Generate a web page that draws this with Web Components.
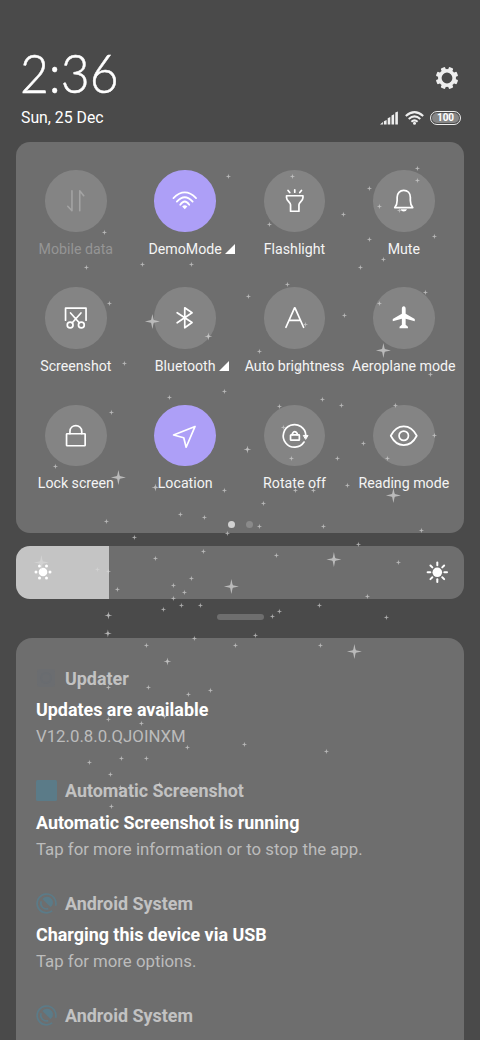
<!DOCTYPE html>
<html lang="en">
<head>
<meta charset="utf-8">
<title>Control centre</title>
<style>
html,body{margin:0;height:100%;overflow:hidden;background:#4a4a4a}
body{font-family:Roboto,"Liberation Sans",sans-serif;color:#fff}
</style>
</head>
<body>
<control-centre></control-centre>
<script>
const ICONS = {
  data:'<g stroke="#a3a3a3" stroke-width="1.6"><path d="M-3.8-10V10L-8 5.5"/><path d="M4 10V-10L8-5"/></g>',
  wifi:'<g stroke-width="1.8"><path d="M-11.3-2.6Q0-14 11.3-2.6M-7.9.9Q0-7.9 7.9.9M-4.5 4.1Q0-2.6 4.5 4.1"/></g><path d="M-2.6 5.8Q0 3 2.6 5.8L0 8.6Z" fill="#fff" stroke="none"/>',
  flash:'<path d="M-8.2-5H8.2V-3C8.2 0 4.2 1.5 4.2 4V10.5H-4.2V4C-4.2 1.5-8.2 0-8.2-3ZM0-8.5V-11M-5-8.2L-6.7-10.3M5-8.2L6.7-10.3"/>',
  bell:'<path d="M-9 6.8H9C7.2 4.8 6.6 3 6.6-.3V-3.5C6.6-7.5 4-10.4 0-10.4S-6.6-7.5-6.6-3.5V-.3C-6.6 3-7.2 4.8-9 6.8Z"/><path d="M-3.3 8.5H3.3Q2.5 10.8 0 10.8T-3.3 8.5Z" fill="#fff" stroke="none"/>',
  shot:'<path d="M-10.2 2.4V-9.6H10.3V2.4M-5.2-4.8L3.5 5M5.2-4.8L-3.5 5"/><circle cx="-5.6" cy="7.3" r="2.9"/><circle cx="5.6" cy="7.3" r="2.9"/>',
  bt:'<path d="M-7.6-5L7.3 4.8L0 10V-10L7.3-5L-7.6 5"/>',
  auto:'<path d="M-8.8 9.5L-.2-9.8H.2L8.8 9.5M-5.4 2.7H5.4"/>',
  plane:'<path d="M0-11.6C-1.2-11.6-1.9-10.5-1.9-9V-4L-11 1.3V3.5L-1.9 1V7L-4.2 9V10.6H4.2V9L1.9 7V1L11 3.5V1.3L1.9-4V-9C1.9-10.5 1.2-11.6 0-11.6Z" fill="#fff" stroke="none"/>',
  lock:'<rect x="-9.2" y="-2" width="18.6" height="12" rx=".6"/><path d="M-5.8-2.2V-4.3C-5.8-12 6-12 6-4.3V-2.2"/>',
  loc:'<path d="M10.3-9.3L-11.2-.7L-1 2L1.4 11.5Z"/>',
  rotate:'<path d="M9.3 6.3A11.3 11.3 0 1 1 11.1-.2"/><path d="M8.9-.3H13.3L11.1 3.3Z" fill="#fff" stroke-width="1"/><rect x="-4.2" y="-.8" width="8.8" height="5.2" rx=".5"/><path d="M-2.3-1V-2.2Q0-6 2.5-2.2V-1"/>',
  eye:'<path d="M-13 0C-6.6-12.5 6.6-12.5 13 0C6.6 12.5-6.6 12.5-13 0Z"/><circle r="4.7"/>'
};

function define(name, css, html){
  customElements.define(name, class extends HTMLElement{
    constructor(){
      super();
      const t=document.createElement('template');
      t.innerHTML=`<style>*{box-sizing:border-box}${css}</style>${typeof html==='function'?html(this):html}`;
      this.attachShadow({mode:'open'}).append(t.content.cloneNode(true));
    }
  });
}

define('status-header',`
:host{display:flex;justify-content:space-between;height:142px;padding:46px 19px 0 21px}
.time{font:300 53.5px/58px Lato,sans-serif;height:60px;width:110px;margin:-3px 0 5px -1px;transform:scaleX(.93);transform-origin:left;-webkit-text-stroke:.5px #fff}
.date{font-size:15.8px;line-height:20px;white-space:nowrap}
.right{display:flex;flex-direction:column;align-items:flex-end;padding-top:20px}
.gear{margin-right:2.5px}
.sys{display:flex;align-items:center;gap:6.5px;height:16px;margin-top:20px}
.battery{width:31px;height:14px;border:1.5px solid #eee;border-radius:7px;padding:1px;display:flex}
.battery span{flex:1;background:#858585;border-radius:5px;font-size:10px;font-weight:700;line-height:10px;text-align:center}
svg{display:block}`,
()=>{
  let teeth='';
  for(let i=0;i<8;i++) teeth+=`<rect x="-2.3" y="-11.2" width="4.6" height="5" rx="1" transform="rotate(${i*45+22.5})"/>`;
  return `<div><div class="time">2:36</div><div class="date">Sun, 25 Dec</div></div>
<div class="right"><svg class="gear" width="24" height="24" viewBox="-12 -12 24 24" fill="#eee">${teeth}<circle r="7.2" fill="none" stroke="#eee" stroke-width="3.6"/></svg>
<div class="sys"><svg width="18" height="14" viewBox="0 0 18 14" fill="#eee"><path d="M0 13.5L2.9 11V13.5ZM3.9 10.2L6.6 9V13.5H3.9ZM7.7 7.2L10.3 6V13.5H7.7ZM11.5 4.5L14.1 3.3V13.5H11.5ZM15.3 1.6L17.9 .4V13.5H15.3Z"/></svg>
<svg width="19" height="14" viewBox="0 0 19 14" fill="none" stroke="#eee" stroke-width="2"><path d="M.8 5Q9.5-2.7 18.2 5M3.7 8Q9.5 2.8 15.3 8M6.4 10.7Q9.5 8 12.6 10.7"/><circle cx="9.5" cy="12.3" r="1.5" fill="#eee" stroke="none"/></svg>
<div class="battery"><span>100</span></div></div></div>`;
});

define('quick-tile',`
:host{display:flex;flex-direction:column;align-items:center;min-width:0}
.disc{width:61.5px;height:61.5px;border-radius:50%;background:#848484;flex:none}
:host([on]) .disc{background:#ad9ff7}
svg{display:block}
.label{display:flex;align-items:baseline;gap:3.5px;white-space:nowrap;font-size:14.2px;line-height:20px;margin-top:7px;color:#f4f4f4}
.label svg{margin-right:-13.5px}
:host([off]) .label{color:#959595}`,
el=>`<div class="disc"><svg width="61.5" height="61.5" viewBox="-30.75 -30.75 61.5 61.5" fill="none" stroke="#fff" stroke-width="1.7" stroke-linejoin="round" stroke-linecap="round">${ICONS[el.getAttribute('icon')]}</svg></div>
<div class="label"><slot></slot>${el.hasAttribute('more')?'<svg width="10" height="10"><path d="M0 10L10 0V10Z" fill="#fff"/></svg>':''}</div>`);

define('quick-panel',`
:host{display:block;margin:0 16px;height:391px;border-radius:14px;background:#6e6e6e;padding:28.2px 5px 0 5.2px}
.grid{display:grid;grid-template-columns:repeat(4,109.33px);grid-auto-rows:117.2px}
.dots{display:flex;gap:11px;justify-content:center;margin-top:-1.2px}
i{width:7px;height:7px;border-radius:50%;background:#8a8a8a}i:first-child{background:#d2d2d2}`,
`<div class="grid"><slot></slot></div><div class="dots"><i></i><i></i></div>`);

define('brightness-bar',`
:host{display:flex;justify-content:space-between;align-items:center;margin:12.5px 16px 0;height:53.5px;padding:0 15px 0 15px;border-radius:14px;background:linear-gradient(90deg,#c4c4c4 93.3px,#6e6e6e 93.3px)}
svg{display:block}`,
()=>{
  let dots='',rays='';
  for(let i=0;i<6;i++){const a=i*Math.PI/3;dots+=`<circle cx="${7*Math.cos(a)}" cy="${7*Math.sin(a)}" r="1.5"/>`}
  for(let i=0;i<8;i++) rays+=`<path d="M0-7V-9.7" transform="rotate(${i*45})"/>`;
  return `<svg width="24" height="24" viewBox="-12 -12 24 24" fill="#fff"><circle r="4.3"/>${dots}</svg>
<svg width="24" height="24" viewBox="-12.3 -12.3 24 24" fill="#fff" stroke="#fff" stroke-width="2" stroke-linecap="round"><circle r="4.8" stroke="none"/>${rays}</svg>`;
});

define('drag-handle',`:host{display:block;width:47px;height:6px;border-radius:3px;background:#6e6e6e;margin:15px auto 17.5px}`,'');

define('notice-item',`
:host{display:block;height:112.5px}
header{display:flex;align-items:center;gap:8px;height:22px;font-size:17.9px;font-weight:700;color:#c2c2c2}
svg{display:block;flex:none}
h3{font-size:17.9px;line-height:22px;margin:10px 0 0;font-weight:700;color:#fff}
p{font-size:16.8px;line-height:22px;margin:4px 0 0;color:#bcbcbc}
header,h3,p{white-space:nowrap}`,
el=>{
  const kinds={
    updater:'<rect x="1" y="1" width="18" height="18" rx="3" fill="#6b6d70"/><circle cx="10" cy="10" r="5" fill="none" stroke="#696c70" stroke-width="2"/>',
    square:'<rect width="21" height="21" rx="1.5" fill="#5b7b88"/>',
    system:'<g fill="none" stroke="#5b7b88" stroke-width="1.7"><path d="M16.2 17.9A9.4 9.4 0 1 1 19.6 12.8"/><path d="M5.2 8.3A5.6 5.6 0 0 0 12.3 15.6"/></g><path d="M6.4 6.1A5.8 5.8 0 0 1 15.9 12.8L14.4 14Z" fill="#5b7b88"/>'};
  return `<header><svg width="21" height="21" viewBox="0 0 21 21">${kinds[el.getAttribute('kind')]}</svg><slot name="app"></slot></header><h3><slot name="title"></slot></h3><p><slot></slot></p>`;
});

define('notice-list',`:host{display:block;margin:0 16px;height:420px;border-radius:16px 16px 0 0;background:#6e6e6e;padding:29.5px 20px 0}`,`<slot></slot>`);

define('star-field',`:host{position:absolute;inset:0;pointer-events:none}svg{display:block}`,
()=>{
  const small='228,176 104,232 86,267 142,264 191,264 292,176 417,168 417,180 369,188 379,206 343,214 269,224 369,239 434,236 383,259 360,267 399,210 109,303 124,363 248,296 287,284 344,315 259,351 305,324 379,303 425,292 430,374 169,397 224,391 111,412 55,466 224,490 180,514 204,517 106,521 227,533 134,537 322,399 341,405 279,406 395,405 283,427 363,443 434,435 291,458 337,458 387,458 295,490 313,490 347,485 263,503 259,526 323,526 421,530 97,569 108,571 117,589 155,558 203,551 191,578 173,585 184,592 173,598 163,609 181,605 200,605 194,638 146,645 235,645 276,555 358,544 398,562 367,596 319,605 279,611 272,616 386,617 255,635 320,645 108,687 148,687 188,694 210,690 164,716 108,719 141,723 244,744 326,751 187,747 121,758 146,758 89,762 110,774 120,787 159,784 111,806';
  const medium='208,336 298,369 155,487 247,449 108,615 107.5,633 167,661';
  const large='152,321 383,350 118,477 393,495 41,562 231,586 333.5,559 354,651';
  const draw=(list,r,o,core)=>list.split(' ').map(p=>{
    const [x,y]=p.split(',');
    return `<g transform="translate(${+x+.4} ${+y+.4}) scale(${r})" opacity="${o}"><path d="M0-1L.17-.17L1 0L.17.17L0 1L-.17.17L-1 0L-.17-.17Z"/><circle r="${core}" opacity=".65"/></g>`}).join('');
  return `<svg width="480" height="1040" fill="#d8d8d8">${draw(small,2.8,.7,.38)}${draw(medium,4,.75,.36)}${draw(large,7.5,.72,.28)}</svg>`;
});

define('control-centre',`:host{display:block;position:relative;width:480px;height:1040px;overflow:hidden;background:#4a4a4a}`,
`<status-header></status-header>
<quick-panel>
<quick-tile icon="data" off>Mobile data</quick-tile><quick-tile icon="wifi" on more>DemoMode</quick-tile><quick-tile icon="flash">Flashlight</quick-tile><quick-tile icon="bell">Mute</quick-tile>
<quick-tile icon="shot">Screenshot</quick-tile><quick-tile icon="bt" more>Bluetooth</quick-tile><quick-tile icon="auto">Auto brightness</quick-tile><quick-tile icon="plane">Aeroplane mode</quick-tile>
<quick-tile icon="lock">Lock screen</quick-tile><quick-tile icon="loc" on>Location</quick-tile><quick-tile icon="rotate">Rotate off</quick-tile><quick-tile icon="eye">Reading mode</quick-tile>
</quick-panel>
<brightness-bar></brightness-bar>
<drag-handle></drag-handle>
<notice-list>
<notice-item kind="updater"><span slot="app">Updater</span><span slot="title">Updates are available</span>V12.0.8.0.QJOINXM</notice-item>
<notice-item kind="square"><span slot="app">Automatic Screenshot</span><span slot="title">Automatic Screenshot is running</span>Tap for more information or to stop the app.</notice-item>
<notice-item kind="system"><span slot="app">Android System</span><span slot="title">Charging this device via USB</span>Tap for more options.</notice-item>
<notice-item kind="system"><span slot="app">Android System</span><span slot="title">USB debugging connected</span></notice-item>
</notice-list>
<star-field></star-field>`);
</script>
</body>
</html>
